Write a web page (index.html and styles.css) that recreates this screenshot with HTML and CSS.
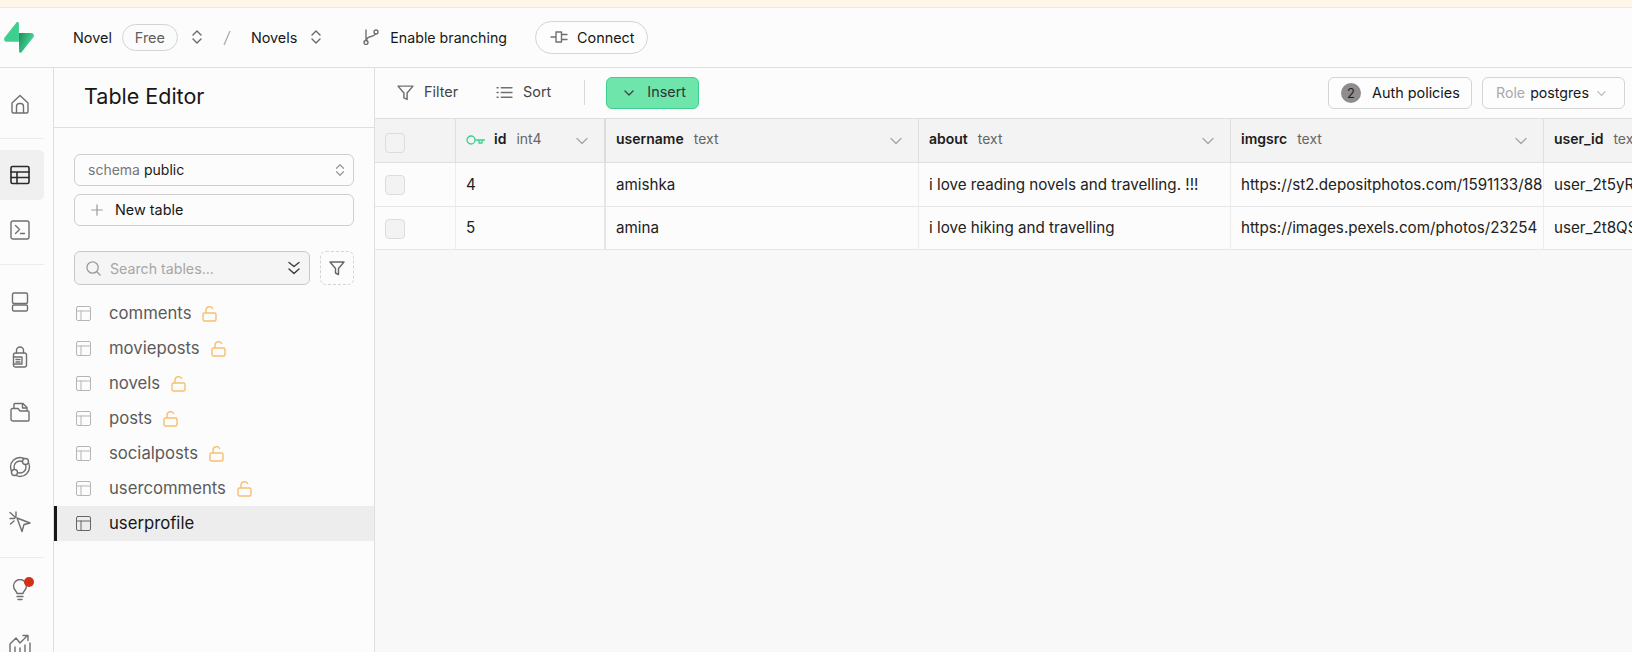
FILE: index.html
```html
<!DOCTYPE html>
<html lang="en">
<head>
<meta charset="utf-8">
<title>Table Editor</title>
<link rel="stylesheet" href="styles.css">
</head>
<body>
<div class="banner"></div>
<header class="topbar">
  <svg class="logo" viewBox="0 0 109 113" fill="none">
    <defs>
      <linearGradient id="lg1" x1="53.97" y1="54.97" x2="94.16" y2="71.83" gradientUnits="userSpaceOnUse"><stop stop-color="#249361"/><stop offset="1" stop-color="#3ECF8E"/></linearGradient>
    </defs>
    <path d="M63.7076 110.284C60.8481 113.885 55.0502 111.912 54.9813 107.314L53.9738 40.0627H99.1935C107.384 40.0627 111.952 49.5228 106.859 55.9374L63.7076 110.284Z" fill="url(#lg1)"/>
    <path d="M45.317 2.07103C48.1765 -1.53037 53.9745 0.442937 54.0434 5.041L54.4849 72.2922H9.83113C1.64038 72.2922 -2.92775 62.8321 2.1655 56.4175L45.317 2.07103Z" fill="#3ECF8E"/>
  </svg>
  <span class="crumb crumb-org">Novel</span>
  <span class="pill">Free</span>
  <svg class="ic updown" viewBox="0 0 16 16"><path d="M4 6 8 2l4 4M4 10l4 4 4-4"/></svg>
  <svg class="slash" viewBox="0 0 10 20"><path d="M8 4 2 18"/></svg>
  <span class="crumb">Novels</span>
  <svg class="ic updown" viewBox="0 0 16 16"><path d="M4 6 8 2l4 4M4 10l4 4 4-4"/></svg>
  <span class="branching">
    <svg class="ic branch" viewBox="0 0 16 16"><circle cx="3" cy="13.500" r="2"/><circle cx="13" cy="3" r="2"/><path d="M3 11.500V1M3.500 11.500c0-3 2-3.500 4.500-4s4-1.500 4.500-2.500"/></svg>
    Enable branching
  </span>
  <button class="connect">
    <svg class="ic plug" viewBox="0 0 18 14"><path d="M1 7h5M6 2h5.500M6 12h5.500M6 2v10M11.500 2v10M11.500 4.500H17M11.500 9.500H17"/></svg>
    Connect
  </button>
</header>
<div class="workspace">
  <nav class="rail">
    <a class="rail-item rail-home"><svg class="ic" viewBox="0 0 20 20"><path d="M2 9 10 1.500 18 9v8.500a1.500 1.500 0 0 1-1.500 1.500h-13A1.500 1.500 0 0 1 2 17.500zM6.500 19v-6.500a3 3 0 0 1 3-3h1a3 3 0 0 1 3 3V19"/></svg></a>
    <hr class="rail-rule">
    <a class="rail-item rail-active"><svg class="ic dark" viewBox="0 0 20 20"><rect x="1" y="1.500" width="18" height="17" rx="1.500"/><path d="M1 7h18M1 12.500h18M7 7v11.500"/></svg></a>
    <a class="rail-item"><svg class="ic" viewBox="0 0 20 20"><rect x="1" y="1" width="18" height="18" rx="2"/><path d="m5.500 5.500 4 4-4 4M10.500 13.500h4"/></svg></a>
    <hr class="rail-rule rail-rule-b">
    <a class="rail-item"><svg class="ic" viewBox="0 0 20 20"><rect x="2.500" y="1" width="15" height="10.500" rx="1.500"/><rect x="2.500" y="13" width="15" height="6" rx="1.500"/></svg></a>
    <a class="rail-item"><svg class="ic lock-ic" viewBox="0 0 16 22"><rect x="1.500" y="7" width="13" height="14" rx="2"/><path d="M4.500 7V4.500a3.500 3.500 0 0 1 7 0V7M1.500 11h8.500v7H1.500M4 13.500h4M4 16h4"/></svg></a>
    <a class="rail-item"><svg class="ic" viewBox="0 0 20 20"><path d="M1 17V8a1.500 1.500 0 0 1 1.500-1.500H8L10 9h8a1 1 0 0 1 1 1v8a1 1 0 0 1-1 1H3a2 2 0 0 1-2-2zM4 6V2.500A1 1 0 0 1 5 1.500h8l4 4v3.500M12.500 2v4h4"/></svg></a>
    <a class="rail-item"><svg class="ic big" viewBox="0 0 22 22"><circle cx="11" cy="11" r="9.500"/><circle cx="11" cy="11" r="6"/><circle cx="16.500" cy="5.500" r="3" class="knock"/><circle cx="5.500" cy="16.500" r="3" class="knock"/></svg></a>
    <a class="rail-item"><svg class="ic big" viewBox="0 0 22 22"><path d="m8 7 13 5-6 1.500-2 7zM1 1.500 6.500 6.500M1 7.500h4.500M7 1v4.500M1.500 13 5 10"/></svg></a>
    <hr class="rail-rule rail-rule-c">
    <a class="rail-item rail-bulb"><svg class="ic bulb" viewBox="0 0 16 22"><path d="M5 14.500c0-2-3.500-3.500-3.500-7.500a6.500 6.500 0 0 1 13 0c0 4-3.500 5.500-3.500 7.500zM5 17.500h6M6 20.500h4"/></svg><span class="dot"></span></a>
    <a class="rail-item"><svg class="ic big" viewBox="0 0 22 22"><path d="M1 21V10l6-6 4 5 7-7M14 1.500h5v5M6 21v-8M11 21v-7M16 21V11M21 21V9"/></svg></a>
  </nav>

  <aside class="panel">
    <h1 class="panel-title">Table Editor</h1>
    <div class="panel-body">
      <div class="select">
        <span class="muted">schema</span><span class="select-val">public</span>
        <svg class="ic updown-sm" viewBox="0 0 16 16"><path d="M4 6 8 2l4 4M4 10l4 4 4-4"/></svg>
      </div>
      <div class="newtable">
        <svg class="ic plus" viewBox="0 0 14 14"><path d="M7 1v12M1 7h12"/></svg>
        New table
      </div>
      <div class="searchrow">
        <div class="search">
          <svg class="ic glass" viewBox="0 0 16 16"><circle cx="7" cy="7" r="6"/><path d="m11.500 11.500 3.500 3.500"/></svg>
          <span class="placeholder">Search tables...</span>
          <svg class="ic dbl" viewBox="0 0 12 14"><path d="m1 1.500 5 4 5-4M1 8l5 4.500L11 8"/></svg>
        </div>
        <div class="filterbtn"><svg class="ic funnel" viewBox="0 0 16 16"><path d="M1 2h14L9.500 8.500V14.500l-3-1.500V8.500z"/></svg></div>
      </div>
    </div>
    <ul class="tables">
      <li class="t-row"><svg class="ic t-ic" viewBox="0 0 15 15"><rect x=".5" y=".5" width="14" height="14" rx="1.500"/><path d="M.5 5h14M5 5v9.500"/></svg><span>comments</span><svg class="lock" viewBox="0 0 15 16"><rect x="1" y="7" width="13" height="8" rx="1.500"/><path d="M4 7V4a3.500 3.500 0 0 1 6.800-1"/></svg></li>
      <li class="t-row"><svg class="ic t-ic" viewBox="0 0 15 15"><rect x=".5" y=".5" width="14" height="14" rx="1.500"/><path d="M.5 5h14M5 5v9.500"/></svg><span>movieposts</span><svg class="lock" viewBox="0 0 15 16"><rect x="1" y="7" width="13" height="8" rx="1.500"/><path d="M4 7V4a3.500 3.500 0 0 1 6.800-1"/></svg></li>
      <li class="t-row"><svg class="ic t-ic" viewBox="0 0 15 15"><rect x=".5" y=".5" width="14" height="14" rx="1.500"/><path d="M.5 5h14M5 5v9.500"/></svg><span>novels</span><svg class="lock" viewBox="0 0 15 16"><rect x="1" y="7" width="13" height="8" rx="1.500"/><path d="M4 7V4a3.500 3.500 0 0 1 6.800-1"/></svg></li>
      <li class="t-row"><svg class="ic t-ic" viewBox="0 0 15 15"><rect x=".5" y=".5" width="14" height="14" rx="1.500"/><path d="M.5 5h14M5 5v9.500"/></svg><span>posts</span><svg class="lock" viewBox="0 0 15 16"><rect x="1" y="7" width="13" height="8" rx="1.500"/><path d="M4 7V4a3.500 3.500 0 0 1 6.800-1"/></svg></li>
      <li class="t-row"><svg class="ic t-ic" viewBox="0 0 15 15"><rect x=".5" y=".5" width="14" height="14" rx="1.500"/><path d="M.5 5h14M5 5v9.500"/></svg><span>socialposts</span><svg class="lock" viewBox="0 0 15 16"><rect x="1" y="7" width="13" height="8" rx="1.500"/><path d="M4 7V4a3.500 3.500 0 0 1 6.800-1"/></svg></li>
      <li class="t-row"><svg class="ic t-ic" viewBox="0 0 15 15"><rect x=".5" y=".5" width="14" height="14" rx="1.500"/><path d="M.5 5h14M5 5v9.500"/></svg><span>usercomments</span><svg class="lock" viewBox="0 0 15 16"><rect x="1" y="7" width="13" height="8" rx="1.500"/><path d="M4 7V4a3.500 3.500 0 0 1 6.800-1"/></svg></li>
      <li class="t-row t-active"><svg class="ic t-ic" viewBox="0 0 15 15"><rect x=".5" y=".5" width="14" height="14" rx="1.500"/><path d="M.5 5h14M5 5v9.500"/></svg><span>userprofile</span></li>
    </ul>
  </aside>

  <main class="main">
    <div class="toolbar">
      <span class="tool tool-filter"><svg class="ic tool-ic" viewBox="0 0 16 16"><path d="M1 2h14L9.500 8.500V14.500l-3-1.500V8.500z"/></svg>Filter</span>
      <span class="tool tool-sort"><svg class="ic tool-ic" viewBox="0 0 16 16"><path d="M5 3.500h10M5 8h10M5 12.500h10M1 3.500h1M1 8h1M1 12.500h1"/></svg>Sort</span>
      <span class="tool-sep"></span>
      <button class="insert"><svg class="ic chev-ins" viewBox="0 0 12 12"><path d="m2 4 4 4 4-4"/></svg>Insert</button>
      <span class="tool-right">
        <button class="outline auth"><span class="badge">2</span>Auth policies</button>
        <button class="outline role"><span class="faint">Role</span> postgres<svg class="ic chev-role" viewBox="0 0 12 12"><path d="m2 4 4 4 4-4"/></svg></button>
      </span>
    </div>
    <div class="grid">
      <div class="cell head cell-check"><span class="check"></span></div>
      <div class="cell head thick"><svg class="key" viewBox="0 0 20 10"><circle cx="5" cy="5" r="4"/><path d="M9 5h10M16 5v3h-3V5"/></svg><b>id</b><span class="type">int4</span><svg class="ic chev-h" viewBox="0 0 12 12"><path d="m1 3.500 5 5 5-5"/></svg></div>
      <div class="cell head"><b>username</b><span class="type">text</span><svg class="ic chev-h" viewBox="0 0 12 12"><path d="m1 3.500 5 5 5-5"/></svg></div>
      <div class="cell head"><b>about</b><span class="type">text</span><svg class="ic chev-h" viewBox="0 0 12 12"><path d="m1 3.500 5 5 5-5"/></svg></div>
      <div class="cell head"><b>imgsrc</b><span class="type">text</span><svg class="ic chev-h" viewBox="0 0 12 12"><path d="m1 3.500 5 5 5-5"/></svg></div>
      <div class="cell head"><b>user_id</b><span class="type">text</span></div>

      <div class="cell cell-check"><span class="check"></span></div>
      <div class="cell thick">4</div>
      <div class="cell">amishka</div>
      <div class="cell">i love reading novels and travelling. !!!</div>
      <div class="cell">https://st2.depositphotos.com/1591133/88</div>
      <div class="cell">user_2t5yR</div>

      <div class="cell cell-check"><span class="check"></span></div>
      <div class="cell thick">5</div>
      <div class="cell">amina</div>
      <div class="cell">i love hiking and travelling</div>
      <div class="cell">https://images.pexels.com/photos/23254</div>
      <div class="cell">user_2t8QS</div>
    </div>
  </main>
</div>
</body>
</html>
```
FILE: styles.css
```css
* { box-sizing: border-box; }
html, body { margin: 0; height: 100%; }
body {
  width: 1632px; height: 652px; overflow: hidden;
  background: #fcfcfc; color: #171717;
  font-family: "Inter", "Liberation Sans", sans-serif;
  font-size: 14.400px; display: flex; flex-direction: column;
}
button { font: inherit; color: inherit; background: none; cursor: pointer; }
.ic { fill: none; stroke: #707070; stroke-width: 1.4; stroke-linecap: round; stroke-linejoin: round; flex: none; display: block; }
.banner { height: 8px; flex: none; background: #fff6ea; border-bottom: 1px solid #f0e6da; }

.topbar { height: 60px; flex: none; display: flex; align-items: center; border-bottom: 1px solid #dfdfdf; padding: 0 0 1px 4px; }
.logo { width: 30px; height: 31px; flex: none; }
.crumb-org { margin-left: 39px; }
.pill { margin-left: 10px; width: 56px; height: 27px; border: 1px solid #d4d4d4; border-radius: 14px; display: flex; align-items: center; justify-content: center; color: #5f5f5f; background: #fbfbfb; }
.updown { width: 16px; height: 16px; margin-left: 11px; stroke: #6a6a6a; }
.slash { width: 10px; height: 20px; margin: 0 19px 0 17px; fill: none; stroke: #a8a8a8; stroke-width: 1.2; }
.branching { display: flex; align-items: center; margin-left: 39px; gap: 11px; font-size: 14.200px; }
.branch { width: 16px; height: 16px; }
.connect { margin-left: 28px; width: 113px; height: 33px; border: 1px solid #d4d4d4; border-radius: 17px; display: flex; align-items: center; padding: 0 0 0 14px; gap: 9px; background: #fdfdfd; }
.plug { width: 18px; height: 14px; }

.workspace { flex: 1; min-height: 0; display: flex; }
.rail { width: 54px; flex: none; border-right: 1px solid #dfdfdf; display: flex; flex-direction: column; gap: 5px; padding-top: 11px; overflow: hidden; }
.rail-item { height: 50px; width: 44px; flex: none; display: flex; align-items: center; justify-content: center; padding-right: 4px; border-radius: 0 5px 5px 0; position: relative; }
.rail-item .ic { width: 20px; height: 20px; stroke: #6f6f6f; }
.rail-item .ic.dark { stroke: #2b2b2b; stroke-width: 1.6; }
.rail-item .ic.big { width: 22px; height: 22px; }
.rail-item .ic.lock-ic { width: 16px; height: 22px; }
.rail-item .ic.bulb { width: 16px; height: 22px; }
.rail-active { background: #f0f0f0; }
.rail-rule { width: 44px; height: 1px; border: 0; background: #ececec; margin: 4px 0 6px; flex: none; }
.rail-rule-b { margin: 4px 0 7px; }
.rail-rule-c { margin: 5px 0 2px; }
.knock { fill: #fcfcfc; }
.dot { position: absolute; width: 10px; height: 10px; border-radius: 50%; background: #d13116; top: 12px; left: 24px; }

.panel { width: 321px; flex: none; border-right: 1px solid #dfdfdf; display: flex; flex-direction: column; }
.panel-title { margin: 0; height: 60px; flex: none; border-bottom: 1px solid #dfdfdf; padding: 0 0 0 30px; font-size: 21.500px; font-weight: 400; line-height: 57px; }
.panel-body { padding: 26px 20px 0; }
.select { height: 32px; border: 1px solid #d0d0d0; border-radius: 6px; display: flex; align-items: center; padding: 0 6px 2px 13px; font-size: 14px; gap: 4px; }
.muted { color: #777; }
.select-val { flex: 1; }
.updown-sm { width: 14px; height: 16px; stroke: #999; margin-top: 2px; }
.newtable { margin-top: 8px; height: 32px; border: 1px solid #d0d0d0; border-radius: 6px; display: flex; align-items: center; padding: 0 0 2px 16px; gap: 12px; }
.plus { width: 12px; height: 12px; stroke: #999; margin-top: 2px; }
.searchrow { margin-top: 25px; display: flex; gap: 10px; height: 34px; }
.search { width: 236px; border: 1px solid #c8c8c8; border-radius: 6px; background: #f5f5f5; display: flex; align-items: center; padding: 0 9px 0 11px; gap: 9px; }
.glass { width: 15px; height: 15px; stroke: #9a9a9a; }
.placeholder { flex: 1; color: #a6a6a6; font-size: 14.200px; }
.dbl { width: 12px; height: 14px; stroke: #3a3a3a; }
.filterbtn { width: 34px; border: 1px dashed #d4d4d4; border-radius: 6px; display: flex; align-items: center; justify-content: center; }
.funnel { width: 16px; height: 16px; stroke: #666; }
.tables { list-style: none; margin: 11px 0 0; padding: 0; }
.t-row { height: 35px; display: flex; align-items: center; padding: 0 0 2px 22px; color: #5a5a5a; font-size: 16.700px; }
.t-ic { width: 15px; height: 15px; stroke: #b5b5b5; stroke-width: 1; margin: 2px 18px 0 0; }
.lock { width: 15px; height: 16px; margin: 2px 0 0 11px; fill: none; stroke: #f6bf70; stroke-width: 1.4; flex: none; }
.t-active { background: #ededed; color: #171717; box-shadow: inset 3px 0 0 #171717; }
.t-active .t-ic { stroke: #666; }

.main { flex: 1; min-width: 0; background: #f8f8f8; overflow: hidden; }
.toolbar { height: 51px; background: #fcfcfc; border-bottom: 1px solid #dfdfdf; display: flex; align-items: center; padding-bottom: 1px; padding-left: 22px; }
.tool { display: flex; align-items: center; color: #444; gap: 10px; padding-bottom: 2px; }
.tool-ic { width: 17px; height: 17px; margin-top: 2px; }
.tool-sort { margin-left: 38px; }
.tool-sep { width: 1px; height: 25px; background: #d8d8d8; margin-left: 33px; }
.insert { margin-left: 21px; width: 93px; height: 32px; border: 1px solid #3ecf8e; border-radius: 6px; background: #6ee5aa; display: flex; align-items: center; padding: 0 0 2px 16px; gap: 12px; color: #333; }
.chev-ins { width: 12px; height: 12px; stroke: #444; margin-top: 2px; }
.tool-right { margin-left: auto; display: flex; gap: 10px; padding-right: 7px; }
.outline { height: 32px; width: 144px; border: 1px solid #d4d4d4; border-radius: 6px; display: flex; align-items: center; background: #fdfdfd; padding-bottom: 2px; }
.auth { padding-left: 12px; padding-right: 0; gap: 11px; }
.badge { width: 20px; height: 20px; border-radius: 50%; background: #8d8d8d; display: flex; align-items: center; justify-content: center; font-size: 13px; color: #222; margin-top: 2px; }
.role { width: 143px; padding-left: 13px; padding-right: 0; gap: 1px; white-space: pre; font-size: 14.200px; }
.faint { color: #aaa; }
.chev-role { width: 11px; height: 11px; stroke: #bbb; margin: 2px 0 0 6px; }

.grid { display: grid; width: 1400px; grid-template-columns: 81px 150px 313px 312px 313px 200px; grid-template-rows: 44px 44px 43px; }
.cell { background: #fcfcfc; border-right: 1px solid #ececec; border-bottom: 1px solid #e6e6e6; display: flex; align-items: center; padding: 0 10px 1px; white-space: nowrap; overflow: hidden; font-size: 15.200px; color: #222; }
.cell.head { background: #f3f3f3; border-color: #dfdfdf; font-size: 14px; position: relative; padding-bottom: 4px; }
.cell.thick { border-right: 2px solid #e6e6e6; }
.cell.head.thick { border-right-color: #dcdcdc; }
.cell.cell-check { align-items: flex-start; padding: 12px 0 0 10px; }
.cell.head.cell-check { padding: 14px 0 0 10px; }
.cell b { font-weight: 600; color: #1c1c1c; }
.type { color: #666; margin-left: 10px; }
.check { width: 20px; height: 20px; border: 1px solid #dcdcdc; border-radius: 4px; background: #f3f3f3; flex: none; }
.key { width: 20px; height: 10px; fill: none; stroke: #3ecf8e; stroke-width: 1.300; margin: 2px 8px 0 0; flex: none; }
.chev-h { position: absolute; right: 16px; top: 16px; width: 12px; height: 12px; stroke: #a8a8a8; }
```
